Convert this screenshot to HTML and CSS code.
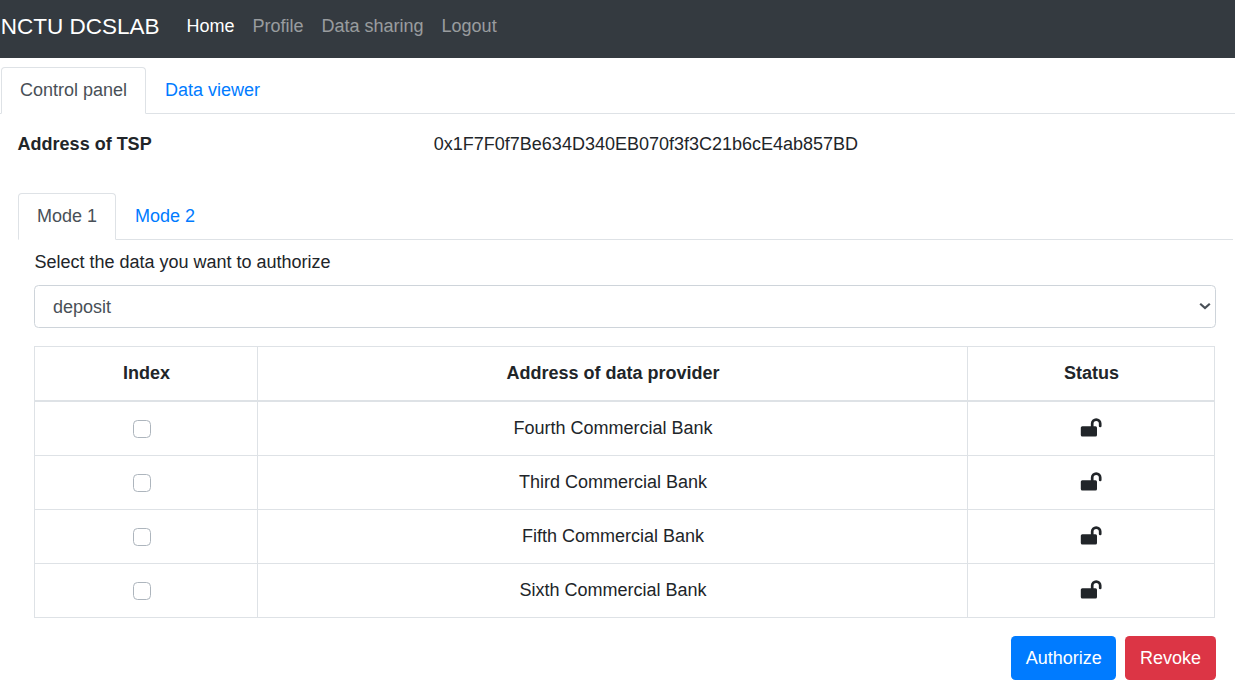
FILE: index.html
```html
<!DOCTYPE html>
<html lang="en">
<head>
<meta charset="utf-8">
<title>NCTU DCSLAB</title>
<link rel="stylesheet" href="styles.css">
</head>
<body>
<svg width="0" height="0" class="defs"><symbol id="unlock" viewBox="0 0 22 20"><path d="M2.300 8.200H15.500q1.500 0 1.500 1.500v7.300q0 1.500-1.500 1.500H2.300Q.8 18.500.8 17V9.700Q.8 8.200 2.300 8.200z" fill="#212529"/><path d="M12.200 8.700V5.600a4 4 0 0 1 8 0v2.400" fill="none" stroke="#212529" stroke-width="2.700" stroke-linecap="round"/></symbol></svg>
<nav class="navbar">
  <a class="brand">NCTU DCSLAB</a>
  <a class="link active">Home</a><a class="link">Profile</a><a class="link">Data sharing</a><a class="link">Logout</a>
</nav>
<div class="tabs main-tabs"><a class="tab active">Control panel</a><a class="tab">Data viewer</a></div>
<main class="panel">
  <div class="address"><b>Address of TSP</b><span>0x1F7F0f7Be634D340EB070f3f3C21b6cE4ab857BD</span></div>
  <div class="tabs"><a class="tab active">Mode 1</a><a class="tab">Mode 2</a></div>
  <section class="mode">
    <label class="label" for="data">Select the data you want to authorize</label>
    <div class="select-wrap">
      <select id="data" class="select"><option>deposit</option></select>
      <svg class="chevron" width="12" height="8" viewBox="0 0 12 8"><path d="M1.200 1.700L6 6l4.800-4.300" fill="none" stroke="#495057" stroke-width="2.200"/></svg>
    </div>
    <table class="table">
      <colgroup><col class="c1"><col class="c2"><col class="c3"></colgroup>
      <thead><tr><th>Index</th><th>Address of data provider</th><th>Status</th></tr></thead>
      <tbody>
        <tr><td><input type="checkbox"></td><td>Fourth Commercial Bank</td><td><svg class="lock"><use href="#unlock"/></svg></td></tr>
        <tr><td><input type="checkbox"></td><td>Third Commercial Bank</td><td><svg class="lock"><use href="#unlock"/></svg></td></tr>
        <tr><td><input type="checkbox"></td><td>Fifth Commercial Bank</td><td><svg class="lock"><use href="#unlock"/></svg></td></tr>
        <tr><td><input type="checkbox"></td><td>Sixth Commercial Bank</td><td><svg class="lock"><use href="#unlock"/></svg></td></tr>
      </tbody>
    </table>
    <div class="actions"><button class="btn primary">Authorize</button><button class="btn danger">Revoke</button></div>
  </section>
</main>
</body>
</html>
```
FILE: styles.css
```css
* { box-sizing: border-box; }
html { font-size: 18px; overflow: hidden; }
body { margin: 0; font-family: "Liberation Sans", Arial, sans-serif; line-height: 26px; color: #212529; background: #fff; }
.defs { position: absolute; }
.navbar { height: 58px; padding: 0 0 6px .7px; display: flex; align-items: center; background: #343a40; }
.brand { font-size: 22.5px; line-height: 28px; padding-top: 2px; color: #fff; margin-right: 18px; }
.link { padding: 0 9px; color: rgba(255, 255, 255, .5); }
.link.active { color: #fff; }
.tabs { display: flex; height: 47px; border-bottom: 1px solid #dee2e6; }
.main-tabs { margin-top: 9px; padding-left: 1px; }
.tab { height: 47px; padding: 9px 18px; border: 1px solid transparent; border-radius: 4px 4px 0 0; color: #007bff; }
.tab.active { color: #495057; background: #fff; border-color: #dee2e6 #dee2e6 #fff; }
.panel { padding: 17px 2px 0 18px; }
.address { display: grid; grid-template-columns: 415.800px 1fr; height: 62px; }
.address b { margin-left: -.4px; }
.mode { padding: 9px 17px 0 16px; }
.label { display: block; height: 36px; padding-left: .4px; }
.select-wrap { position: relative; height: 43px; }
.select { appearance: none; width: 100%; height: 43px; padding: 0 18px; border: 1px solid #ced4da; border-radius: 4.5px; background: #fff; color: #495057; font: inherit; }
.chevron { position: absolute; right: 5px; top: 17px; }
.table { width: 1181px; margin-top: 18px; table-layout: fixed; border-collapse: separate; border-spacing: 0; border: solid #dee2e6; border-width: 1px 0 0 1px; text-align: center; }
.c1 { width: 223px; }
.c2 { width: 710px; }
.c3 { width: 247px; }
th, td { height: 54px; padding: 0 0 2px 1px; border: solid #dee2e6; border-width: 0 1px 1px 0; }
th { height: 55px; border-bottom-width: 2px; }
input { appearance: none; display: block; width: 18px; height: 18px; margin: 2px auto 0; border: 1px solid #adb5bd; border-radius: 4.5px; background: #fff; position: relative; left: -4.5px; }
.lock { display: block; width: 22px; height: 20px; margin: 0 auto; transform: translateX(-1px); }
.actions { display: flex; justify-content: flex-end; gap: 9px; margin-top: 18px; }
.btn { height: 44px; border: 0; padding: 0; border-radius: 4.5px; color: #fff; font: inherit; }
.primary { width: 105px; padding-left: .5px; background: #007bff; }
.danger { width: 91px; background: #dc3545; }
```
